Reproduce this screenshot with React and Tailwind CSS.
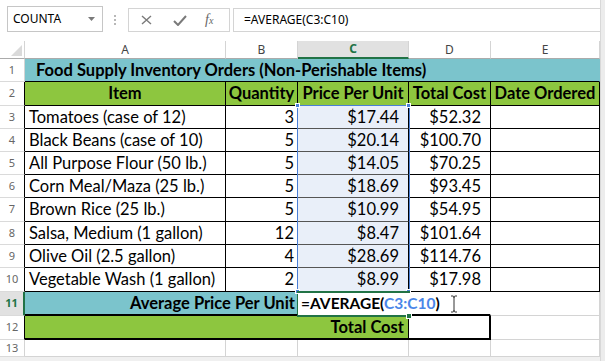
import React from 'react';

const data = [
  { n: 3, item: 'Tomatoes (case of 12)', qty: 3, price: '$17.44', total: '$52.32', h: 'h-[23px]' },
  { n: 4, item: 'Black Beans (case of 10)', qty: 5, price: '$20.14', total: '$100.70', h: 'h-[23px]' },
  { n: 5, item: 'All Purpose Flour (50 lb.)', qty: 5, price: '$14.05', total: '$70.25', h: 'h-[23px]' },
  { n: 6, item: 'Corn Meal/Maza (25 lb.)', qty: 5, price: '$18.69', total: '$93.45', h: 'h-[23px]' },
  { n: 7, item: 'Brown Rice (25 lb.)', qty: 5, price: '$10.99', total: '$54.95', h: 'h-[24px]' },
  { n: 8, item: 'Salsa, Medium (1 gallon)', qty: 12, price: '$8.47', total: '$101.64', h: 'h-[23px]' },
  { n: 9, item: 'Olive Oil (2.5 gallon)', qty: 4, price: '$28.69', total: '$114.76', h: 'h-[23px]' },
  { n: 10, item: 'Vegetable Wash (1 gallon)', qty: 2, price: '$8.99', total: '$17.98', h: 'h-[24px]' },
];

const RowHead = ({ n, className = 'border-r-[#d4d4d4] text-[#666]' }) => (
  <div className={`w-[25px] shrink-0 flex items-center justify-center border-r border-b border-b-[#dadada] text-[11px] font-['Noto_Sans',sans-serif] ${className}`}>
    {n}
  </div>
);

const Cell = ({ className = '', children }) => (
  <div className={`shrink-0 flex items-center border-r border-b whitespace-nowrap ${className}`}>{children}</div>
);

const ColHead = ({ label, className = 'bg-white text-[#444] border-b-[#ababab]' }) => (
  <div className={`shrink-0 flex items-center justify-center border-r border-r-[#d4d4d4] border-b text-[12px] ${className}`}>
    {label}
  </div>
);

const Handle = ({ className }) => (
  <div className={`absolute w-[5px] h-[5px] bg-[#4a7fd6] border border-white ${className}`} />
);

export default function App() {
  return (
    <div className="w-[605px] h-[361px] bg-[#f0f0f0] flex overflow-hidden">
      <div className="w-[600px] flex flex-col relative">
        {/* Formula bar */}
        <div className="h-[41px] bg-white flex items-start font-['Noto_Sans',sans-serif] text-[12px] text-black">
          <div className="ml-[7px] mt-[6px] w-[96px] h-[26px] border border-[#c6c6c6] flex items-center justify-between pl-[5px] pr-[7px]">
            <span>COUNTA</span>
            <svg width="7" height="4" viewBox="0 0 7 4"><path d="M0 0 L7 0 L3.5 4 Z" fill="#7a7a7a" /></svg>
          </div>
          <div className="ml-[11px] mt-[15px] flex flex-col gap-[2px]">
            <div className="w-[2px] h-[2px] bg-[#b8b8b8]" />
            <div className="w-[2px] h-[2px] bg-[#b8b8b8]" />
            <div className="w-[2px] h-[2px] bg-[#b8b8b8]" />
          </div>
          <div className="ml-[12px] mt-[8px] w-[102px] h-[24px] border border-[#d4d4d4] flex items-center">
            <svg className="ml-[12px]" width="11" height="10" viewBox="0 0 11 10">
              <path d="M1 1 L10 9 M10 1 L1 9" stroke="#7a7a7a" strokeWidth="1.4" />
            </svg>
            <svg className="ml-[21px]" width="14" height="11" viewBox="0 0 14 11">
              <path d="M1 6 L5 10 L13 1" stroke="#7a7a7a" strokeWidth="2" fill="none" />
            </svg>
            <span className="ml-[18px] font-['Liberation_Serif',serif] italic text-[14px] text-[#666] leading-none">
              f<span className="text-[10px]">x</span>
            </span>
          </div>
          <div className="ml-[3px] mt-[8px] flex-1 h-[24px] border border-r-0 border-[#d4d4d4] flex items-center pl-[10px]">
            =AVERAGE(C3:C10)
          </div>
        </div>

        {/* Column headers */}
        <div className="h-[18px] flex bg-white font-['Noto_Sans',sans-serif]">
          <div className="w-[25px] shrink-0 border-r border-b border-r-[#d4d4d4] border-b-[#ababab] flex items-end justify-end p-[2px]">
            <svg width="11" height="11" viewBox="0 0 11 11"><path d="M11 0 L11 11 L0 11 Z" fill="#dadada" /></svg>
          </div>
          <ColHead label="A" className="w-[201px] bg-white text-[#444] border-b-[#ababab]" />
          <ColHead label="B" className="w-[72px] bg-white text-[#444] border-b-[#ababab]" />
          <ColHead label="C" className="w-[111px] bg-[#e1e1e1] text-[#217346] font-bold border-b-2 border-b-[#217346]" />
          <ColHead label="D" className="w-[82px] bg-white text-[#444] border-b-[#ababab]" />
          <ColHead label="E" className="w-[109px] bg-white text-[#444] border-b-[#ababab]" />
        </div>

        <div className="font-['Lato','Liberation_Sans',sans-serif] text-[16.5px] text-black bg-white">
          {/* Row 1 */}
          <div className="h-[23px] flex">
            <RowHead n={1} />
            <Cell className="w-[575px] bg-[#7bc4cc] border-r-[#7bc4cc] border-b-black font-bold pl-[11px]">
              Food Supply Inventory Orders (Non-Perishable Items)
            </Cell>
          </div>

          {/* Row 2 */}
          <div className="h-[24px] flex">
            <RowHead n={2} className="border-r-black text-[#666]" />
            <Cell className="w-[201px] bg-[#8dc63f] border-r-black border-b-black font-bold justify-center">Item</Cell>
            <Cell className="w-[72px] bg-[#8dc63f] border-r-black border-b-black font-bold justify-center">Quantity</Cell>
            <Cell className="w-[111px] bg-[#8dc63f] border-r-black border-b-black font-bold justify-center">Price Per Unit</Cell>
            <Cell className="w-[82px] bg-[#8dc63f] border-r-black border-b-black font-bold justify-center">Total Cost</Cell>
            <Cell className="w-[109px] bg-[#8dc63f] border-r-black border-b-black font-bold justify-center">Date Ordered</Cell>
          </div>

          {/* Data rows */}
          {data.map((row) => (
            <div key={row.n} className={`flex ${row.h}`}>
              <RowHead n={row.n} className="border-r-black text-[#666]" />
              <Cell className="w-[201px] border-r-black border-b-black pl-[4px]">{row.item}</Cell>
              <Cell className="w-[72px] border-r-black border-b-black justify-end pr-[3px]">{row.qty}</Cell>
              <Cell className="w-[111px] bg-[#e9eff9] border-r-black border-b-[#555] justify-end pr-[9px]">{row.price}</Cell>
              <Cell className="w-[82px] border-r-black border-b-black justify-end pr-[9px]">{row.total}</Cell>
              <Cell className="w-[109px] border-r-black border-b-black" />
            </div>
          ))}

          {/* Row 11 */}
          <div className="h-[24px] flex">
            <RowHead n={11} className="bg-[#e1e1e1] border-r-2 border-r-[#217346] text-[#217346] font-bold" />
            <Cell className="w-[273px] bg-[#7bc4cc] border-r-[#217346] border-b-2 border-b-black font-bold justify-end pr-[2px]">
              Average Price Per Unit
            </Cell>
            <Cell className="w-[111px] border-r-transparent border-b-[#217346] pl-[3px] font-bold text-[15.5px] overflow-visible">
              <span>=AVERAGE(<span className="text-[#4a86e8]">C3:C10</span>)</span>
            </Cell>
            <Cell className="w-[82px] border-r-transparent border-b-2 border-b-black" />
            <Cell className="w-[109px] border-r-[#d4d4d4] border-b-[#d4d4d4]" />
          </div>

          {/* Row 12 */}
          <div className="h-[24px] flex">
            <RowHead n={12} className="border-r-black text-[#666]" />
            <Cell className="w-[384px] bg-[#8dc63f] border-r-black border-b-2 border-b-black font-bold justify-end pr-[4px]">
              Total Cost
            </Cell>
            <Cell className="w-[82px] border-r-2 border-r-black border-b-2 border-b-black" />
            <Cell className="w-[109px] border-r-[#d4d4d4] border-b-[#d4d4d4]" />
          </div>

          {/* Row 13 */}
          <div className="h-[17px] flex">
            <RowHead n={13} />
            <Cell className="w-[201px] border-r-[#d4d4d4] border-b-[#d4d4d4]" />
            <Cell className="w-[72px] border-r-[#d4d4d4] border-b-[#d4d4d4]" />
            <Cell className="w-[111px] border-r-[#d4d4d4] border-b-[#d4d4d4]" />
            <Cell className="w-[82px] border-r-[#d4d4d4] border-b-[#d4d4d4]" />
            <Cell className="w-[109px] border-r-[#d4d4d4] border-b-[#d4d4d4]" />
          </div>
        </div>

        {/* Referenced range C3:C10 */}
        <div className="absolute left-[297px] top-[105px] w-[113px] h-[188px] border border-[#4a7fd6] pointer-events-none" />
        <Handle className="left-[295px] top-[103px]" />
        <Handle className="left-[406px] top-[103px]" />
        <Handle className="left-[295px] top-[289px]" />
        <Handle className="left-[406px] top-[289px]" />

        {/* Active cell C11 */}
        <div className="absolute left-[297px] top-[291px] w-[113px] h-[26px] border-2 border-[#217346] border-l-0 border-r-0 pointer-events-none" />
        <div className="absolute left-[406px] top-[313px] w-[6px] h-[6px] bg-[#217346] border border-white" />

        {/* Text cursor */}
        <svg className="absolute left-[450px] top-[295px]" width="8" height="18" viewBox="0 0 8 18">
          <path d="M1 1 H3 Q4 1 4 3 V15 Q4 17 3 17 H1 M7 1 H5 Q4 1 4 3 M4 15 Q4 17 5 17 H7" stroke="#333" strokeWidth="1" fill="none" />
        </svg>
      </div>
      <div className="w-[5px] bg-[#ececec] border-l border-[#d8d8d8]" />
    </div>
  );
}
